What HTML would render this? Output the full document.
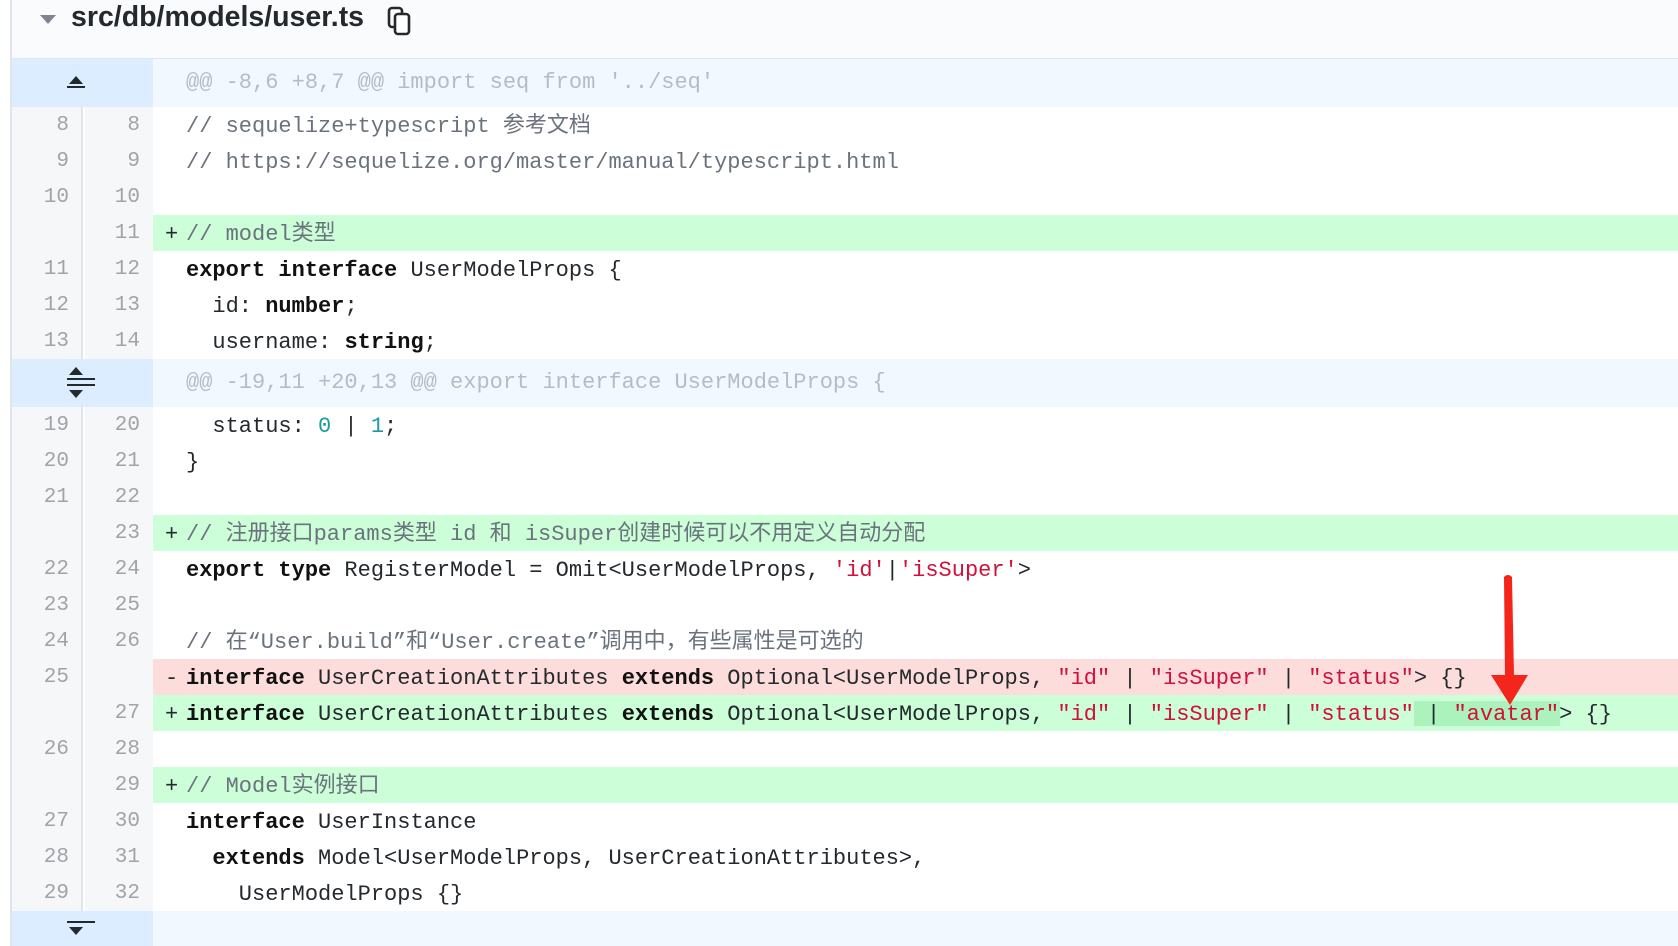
<!DOCTYPE html>
<html><head><meta charset="utf-8"><style>
*{margin:0;padding:0;box-sizing:border-box}
html,body{width:1678px;height:946px;overflow:hidden;background:#fff}
body{position:relative;font-family:"Liberation Mono","Noto Sans CJK SC",monospace}
.hdr{position:absolute;left:11px;top:0;width:1667px;height:59px;background:#fafbfc;border-bottom:1px solid #e1e4e8}
.lb{position:absolute;left:10px;top:0;width:2px;height:946px;background:#e1e4e8}
.tri{position:absolute;left:40px;top:15px;width:0;height:0;border-left:8px solid transparent;border-right:8px solid transparent;border-top:9px solid #7d8590}
.title{position:absolute;left:71px;top:1px;font:bold 28.5px "Liberation Sans",sans-serif;color:#24292e}
.row{position:absolute;left:12px;width:1666px;height:36px}
.g1,.g2{position:absolute;top:0;height:100%;background:#f6f7f8;color:#a0a4a8;font-size:21px;text-align:right;line-height:38px}
.g1{left:0;width:71px;padding-right:12px;border-right:2px solid #e1e4e8}
.g2{left:73px;width:68px;padding-right:13px}
.c{position:absolute;left:141px;right:0;top:0;height:100%;font-size:22px;line-height:39px;color:#24292e;white-space:pre;padding-left:33px}
.m{position:absolute;left:12px;top:0}
.add .c{background:#ccffd8}
.del .c{background:#fddcdc}
.hunk .g{position:absolute;left:0;top:0;width:141px;height:100%;background:#dbedff}
.hunk .c{background:#f1f8ff;color:#b6bcc3}
.cm{color:#6a737d}.k{font-weight:bold;color:#111}.s{color:#d1103c}.n{color:#1b9aa0}
</style></head><body>
<div class="hdr"></div>
<div class="lb"></div>
<div class="tri"></div>
<div class="title">src/db/models/user.ts</div>
<svg style="position:absolute;left:387px;top:6px" width="26" height="30" viewBox="0 0 26 30"><rect x="2" y="2" width="13" height="19" rx="3" fill="none" stroke="#24292e" stroke-width="2.6"/><rect x="8" y="8" width="14" height="20" rx="3" fill="#fff" stroke="#24292e" stroke-width="2.6"/></svg>

<div class="row hunk" style="top:59px;height:48px"><div class="g"><div style="position:absolute;left:57px;top:17px;width:0;height:0;border-left:7px solid transparent;border-right:7px solid transparent;border-bottom:8px solid #24292e"></div><div style="position:absolute;left:55px;top:27px;width:18px;height:2px;background:#24292e"></div></div><div class="c" style="line-height:48px">@@ -8,6 +8,7 @@ import seq from '../seq'</div></div>

<div class="row" style="top:107px"><div class="g1">8</div><div class="g2">8</div><div class="c"><span class="cm">// sequelize+typescript 参考文档</span></div></div>
<div class="row" style="top:143px"><div class="g1">9</div><div class="g2">9</div><div class="c"><span class="cm">// https://sequelize.org/master/manual/typescript.html</span></div></div>
<div class="row" style="top:179px"><div class="g1">10</div><div class="g2">10</div><div class="c"></div></div>
<div class="row add" style="top:215px"><div class="g1"></div><div class="g2">11</div><div class="c"><span class="m">+</span><span class="cm">// model类型</span></div></div>
<div class="row" style="top:251px"><div class="g1">11</div><div class="g2">12</div><div class="c"><span class="k">export</span> <span class="k">interface</span> UserModelProps {</div></div>
<div class="row" style="top:287px"><div class="g1">12</div><div class="g2">13</div><div class="c">  id: <span class="k">number</span>;</div></div>
<div class="row" style="top:323px"><div class="g1">13</div><div class="g2">14</div><div class="c">  username: <span class="k">string</span>;</div></div>

<div class="row hunk" style="top:359px;height:48px"><div class="g"><div style="position:absolute;left:57px;top:8px;width:0;height:0;border-left:7px solid transparent;border-right:7px solid transparent;border-bottom:8px solid #24292e"></div><div style="position:absolute;left:55px;top:19px;width:28px;height:2px;background:#24292e"></div><div style="position:absolute;left:55px;top:25px;width:28px;height:2px;background:#24292e"></div><div style="position:absolute;left:57px;top:31px;width:0;height:0;border-left:7px solid transparent;border-right:7px solid transparent;border-top:8px solid #24292e"></div></div><div class="c" style="line-height:48px">@@ -19,11 +20,13 @@ export interface UserModelProps {</div></div>

<div class="row" style="top:407px"><div class="g1">19</div><div class="g2">20</div><div class="c">  status: <span class="n">0</span> | <span class="n">1</span>;</div></div>
<div class="row" style="top:443px"><div class="g1">20</div><div class="g2">21</div><div class="c">}</div></div>
<div class="row" style="top:479px"><div class="g1">21</div><div class="g2">22</div><div class="c"></div></div>
<div class="row add" style="top:515px"><div class="g1"></div><div class="g2">23</div><div class="c"><span class="m">+</span><span class="cm">// 注册接口params类型 id 和 isSuper创建时候可以不用定义自动分配</span></div></div>
<div class="row" style="top:551px"><div class="g1">22</div><div class="g2">24</div><div class="c"><span class="k">export</span> <span class="k">type</span> RegisterModel = Omit&lt;UserModelProps, <span class="s">'id'</span>|<span class="s">'isSuper'</span>&gt;</div></div>
<div class="row" style="top:587px"><div class="g1">23</div><div class="g2">25</div><div class="c"></div></div>
<div class="row" style="top:623px"><div class="g1">24</div><div class="g2">26</div><div class="c"><span class="cm">// 在“User.build”和“User.create”调用中，有些属性是可选的</span></div></div>
<div class="row del" style="top:659px"><div class="g1">25</div><div class="g2"></div><div class="c"><span class="m">-</span><span class="k">interface</span> UserCreationAttributes <span class="k">extends</span> Optional&lt;UserModelProps, <span class="s">"id"</span> | <span class="s">"isSuper"</span> | <span class="s">"status"</span>&gt; {}</div></div>
<div class="row add" style="top:695px"><div class="g1"></div><div class="g2">27</div><div class="c"><div style="position:absolute;left:1261px;top:6px;width:146px;height:25px;background:#abf2bc"></div><span class="m">+</span><span style="position:relative"><span class="k">interface</span> UserCreationAttributes <span class="k">extends</span> Optional&lt;UserModelProps, <span class="s">"id"</span> | <span class="s">"isSuper"</span> | <span class="s">"status"</span> | <span class="s">"avatar"</span>&gt; {}</span></div></div>
<div class="row" style="top:731px"><div class="g1">26</div><div class="g2">28</div><div class="c"></div></div>
<div class="row add" style="top:767px"><div class="g1"></div><div class="g2">29</div><div class="c"><span class="m">+</span><span class="cm">// Model实例接口</span></div></div>
<div class="row" style="top:803px"><div class="g1">27</div><div class="g2">30</div><div class="c"><span class="k">interface</span> UserInstance</div></div>
<div class="row" style="top:839px"><div class="g1">28</div><div class="g2">31</div><div class="c">  <span class="k">extends</span> Model&lt;UserModelProps, UserCreationAttributes&gt;,</div></div>
<div class="row" style="top:875px"><div class="g1">29</div><div class="g2">32</div><div class="c">    UserModelProps {}</div></div>

<div class="row hunk" style="top:911px;height:35px"><div class="g"><div style="position:absolute;left:55px;top:10px;width:28px;height:2px;background:#24292e"></div><div style="position:absolute;left:57px;top:16px;width:0;height:0;border-left:7px solid transparent;border-right:7px solid transparent;border-top:8px solid #24292e"></div></div><div class="c"></div></div>

<svg style="position:absolute;left:1485px;top:570px" width="50" height="140" viewBox="0 0 50 140"><path d="M19 7 Q23 3 27 7 L29 105 L43 105 L25 135 L6 105 L20 105 Z" fill="#f4261b"/></svg>
</body></html>
